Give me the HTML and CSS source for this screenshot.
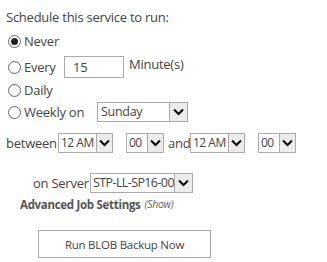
FILE: index.html
```html
<!DOCTYPE html>
<html>
<head>
<meta charset="utf-8">
<link rel="stylesheet" href="styles.css">
</head>
<body>
<div class="page">
  <div class="title">Schedule this service to run:</div>
  <div class="row r-never"><span class="radio checked"></span><span class="lbl">Never</span></div>
  <div class="row r-every"><span class="radio"></span><span class="lbl w-every">Every</span><span class="textbox">15</span><span class="after">Minute(s)</span></div>
  <div class="row r-daily"><span class="radio"></span><span class="lbl">Daily</span></div>
  <div class="row r-weekly"><span class="radio"></span><span class="lbl w-weekly">Weekly on</span>
    <span class="select sel-day"><span class="val">Sunday</span><span class="arrow big"><svg width="11" height="8" viewBox="0 0 11 8"><path d="M1 1.5 L5.5 6 L10 1.5" fill="none" stroke="#000" stroke-width="2"/></svg></span></span>
  </div>
  <div class="row r-between"><span class="word w-between">between</span>
    <span class="select sel-hour"><span class="val">12 AM</span><span class="arrow"><svg width="11" height="8" viewBox="0 0 11 8"><path d="M1 1.5 L5.5 6 L10 1.5" fill="none" stroke="#000" stroke-width="2"/></svg></span></span>
    <span class="select sel-min"><span class="val">00</span><span class="arrow"><svg width="11" height="8" viewBox="0 0 11 8"><path d="M1 1.5 L5.5 6 L10 1.5" fill="none" stroke="#000" stroke-width="2"/></svg></span></span>
    <span class="word w-and">and</span>
    <span class="select sel-hour"><span class="val">12 AM</span><span class="arrow"><svg width="11" height="8" viewBox="0 0 11 8"><path d="M1 1.5 L5.5 6 L10 1.5" fill="none" stroke="#000" stroke-width="2"/></svg></span></span>
    <span class="select sel-min"><span class="val">00</span><span class="arrow"><svg width="11" height="8" viewBox="0 0 11 8"><path d="M1 1.5 L5.5 6 L10 1.5" fill="none" stroke="#000" stroke-width="2"/></svg></span></span>
  </div>
  <div class="row r-server"><span class="word w-server">on Server</span>
    <span class="select sel-server"><span class="val">STP-LL-SP16-00</span><span class="arrow big"><svg width="11" height="8" viewBox="0 0 11 8"><path d="M1 1.5 L5.5 6 L10 1.5" fill="none" stroke="#000" stroke-width="2"/></svg></span></span>
  </div>
  <div class="row r-adv"><span class="adv">Advanced Job Settings</span><span class="show">(Show)</span></div>
  <div class="r-btn"><span class="btn">Run BLOB Backup Now</span></div>
</div>
</body>
</html>
```
FILE: styles.css
```css
html, body {
  margin: 0;
  padding: 0;
  background: #fff;
}
.page {
  width: 327px;
  height: 262px;
  padding: 7px 0 0 6px;
  box-sizing: border-box;
  font-family: "Open Sans", "Noto Sans", sans-serif;
  font-size: 13px;
  color: #444;
  letter-spacing: -0.25px;
}
.title {
  height: 20px;
  line-height: 20px;
}
.row {
  display: flex;
  align-items: center;
}
.r-never { margin-top: 4px; height: 20px; }
.r-every { margin-top: 5px; height: 22px; }
.r-daily { margin-top: 3px; height: 18px; }
.r-weekly { margin-top: 3px; height: 20px; }
.r-between { margin-top: 11px; height: 20px; }
.r-server { margin-top: 20px; height: 20px; padding-left: 27px; }
.r-adv { margin-top: 2px; height: 18px; padding-left: 14px; }
.radio {
  width: 11px;
  height: 11px;
  border: 1px solid #666;
  border-radius: 50%;
  margin-left: 2px;
  margin-right: 3px;
  position: relative;
  flex: none;
  background: #fff;
}
.radio.checked::after {
  content: "";
  position: absolute;
  left: 2px;
  top: 2px;
  width: 7px;
  height: 7px;
  border-radius: 50%;
  background: #222;
}
.w-every { width: 40px; flex: none; }
.w-weekly { width: 73px; flex: none; }
.textbox {
  height: 20px;
  border: 1px solid #ababab;
  line-height: 20px;
  padding-left: 8px;
  width: 50px;
  color: #444;
  flex: none;
}
.after { margin-left: 5px; margin-top: -6px; }
.select {
  display: flex;
  align-items: stretch;
  border: 1px solid #ababab;
  height: 18px;
  background: #fff;
  overflow: hidden;
  flex: none;
}
.select .val {
  flex: 1;
  padding-left: 3px;
  line-height: 18px;
  white-space: nowrap;
  overflow: hidden;
  color: #444;
  font-size: 12.5px;
  letter-spacing: -0.3px;
}
.select .arrow {
  flex: none;
  width: 15px;
  background: #ececec;
  border-left: 1px solid #ababab;
  display: flex;
  align-items: center;
  justify-content: center;
}
.select .arrow.big { width: 17px; }
.sel-day { width: 89px; }
.sel-hour { width: 53px; }
.sel-hour .val { font-size: 12px; letter-spacing: -0.5px; padding-left: 2px; }
.sel-min { width: 36px; }
.sel-min .val { padding-left: 2px; font-size: 12px; letter-spacing: -0.5px; }
.w-between { width: 52px; flex: none; }
.r-between .sel-min { margin-left: 13px; }
.w-and { margin-left: 4px; width: 22px; flex: none; }
.w-server { width: 57px; flex: none; }
.sel-server { width: 101px; }
.sel-server .val { letter-spacing: -0.6px; padding-left: 2px; text-overflow: clip; }
.adv {
  font-weight: bold;
  color: #555;
  font-size: 11.5px;
  letter-spacing: -0.3px;
}
.show {
  font-style: italic;
  font-size: 10.5px;
  color: #666;
  margin-left: 4px;
  letter-spacing: -0.3px;
}
.r-btn {
  margin-top: 17px;
  padding-left: 32px;
}
.btn {
  display: flex;
  align-items: center;
  justify-content: center;
  width: 171px;
  height: 26px;
  border: 1px solid #ababab;
  font-size: 11.5px;
  color: #444;
  background: #fff;
}
```
